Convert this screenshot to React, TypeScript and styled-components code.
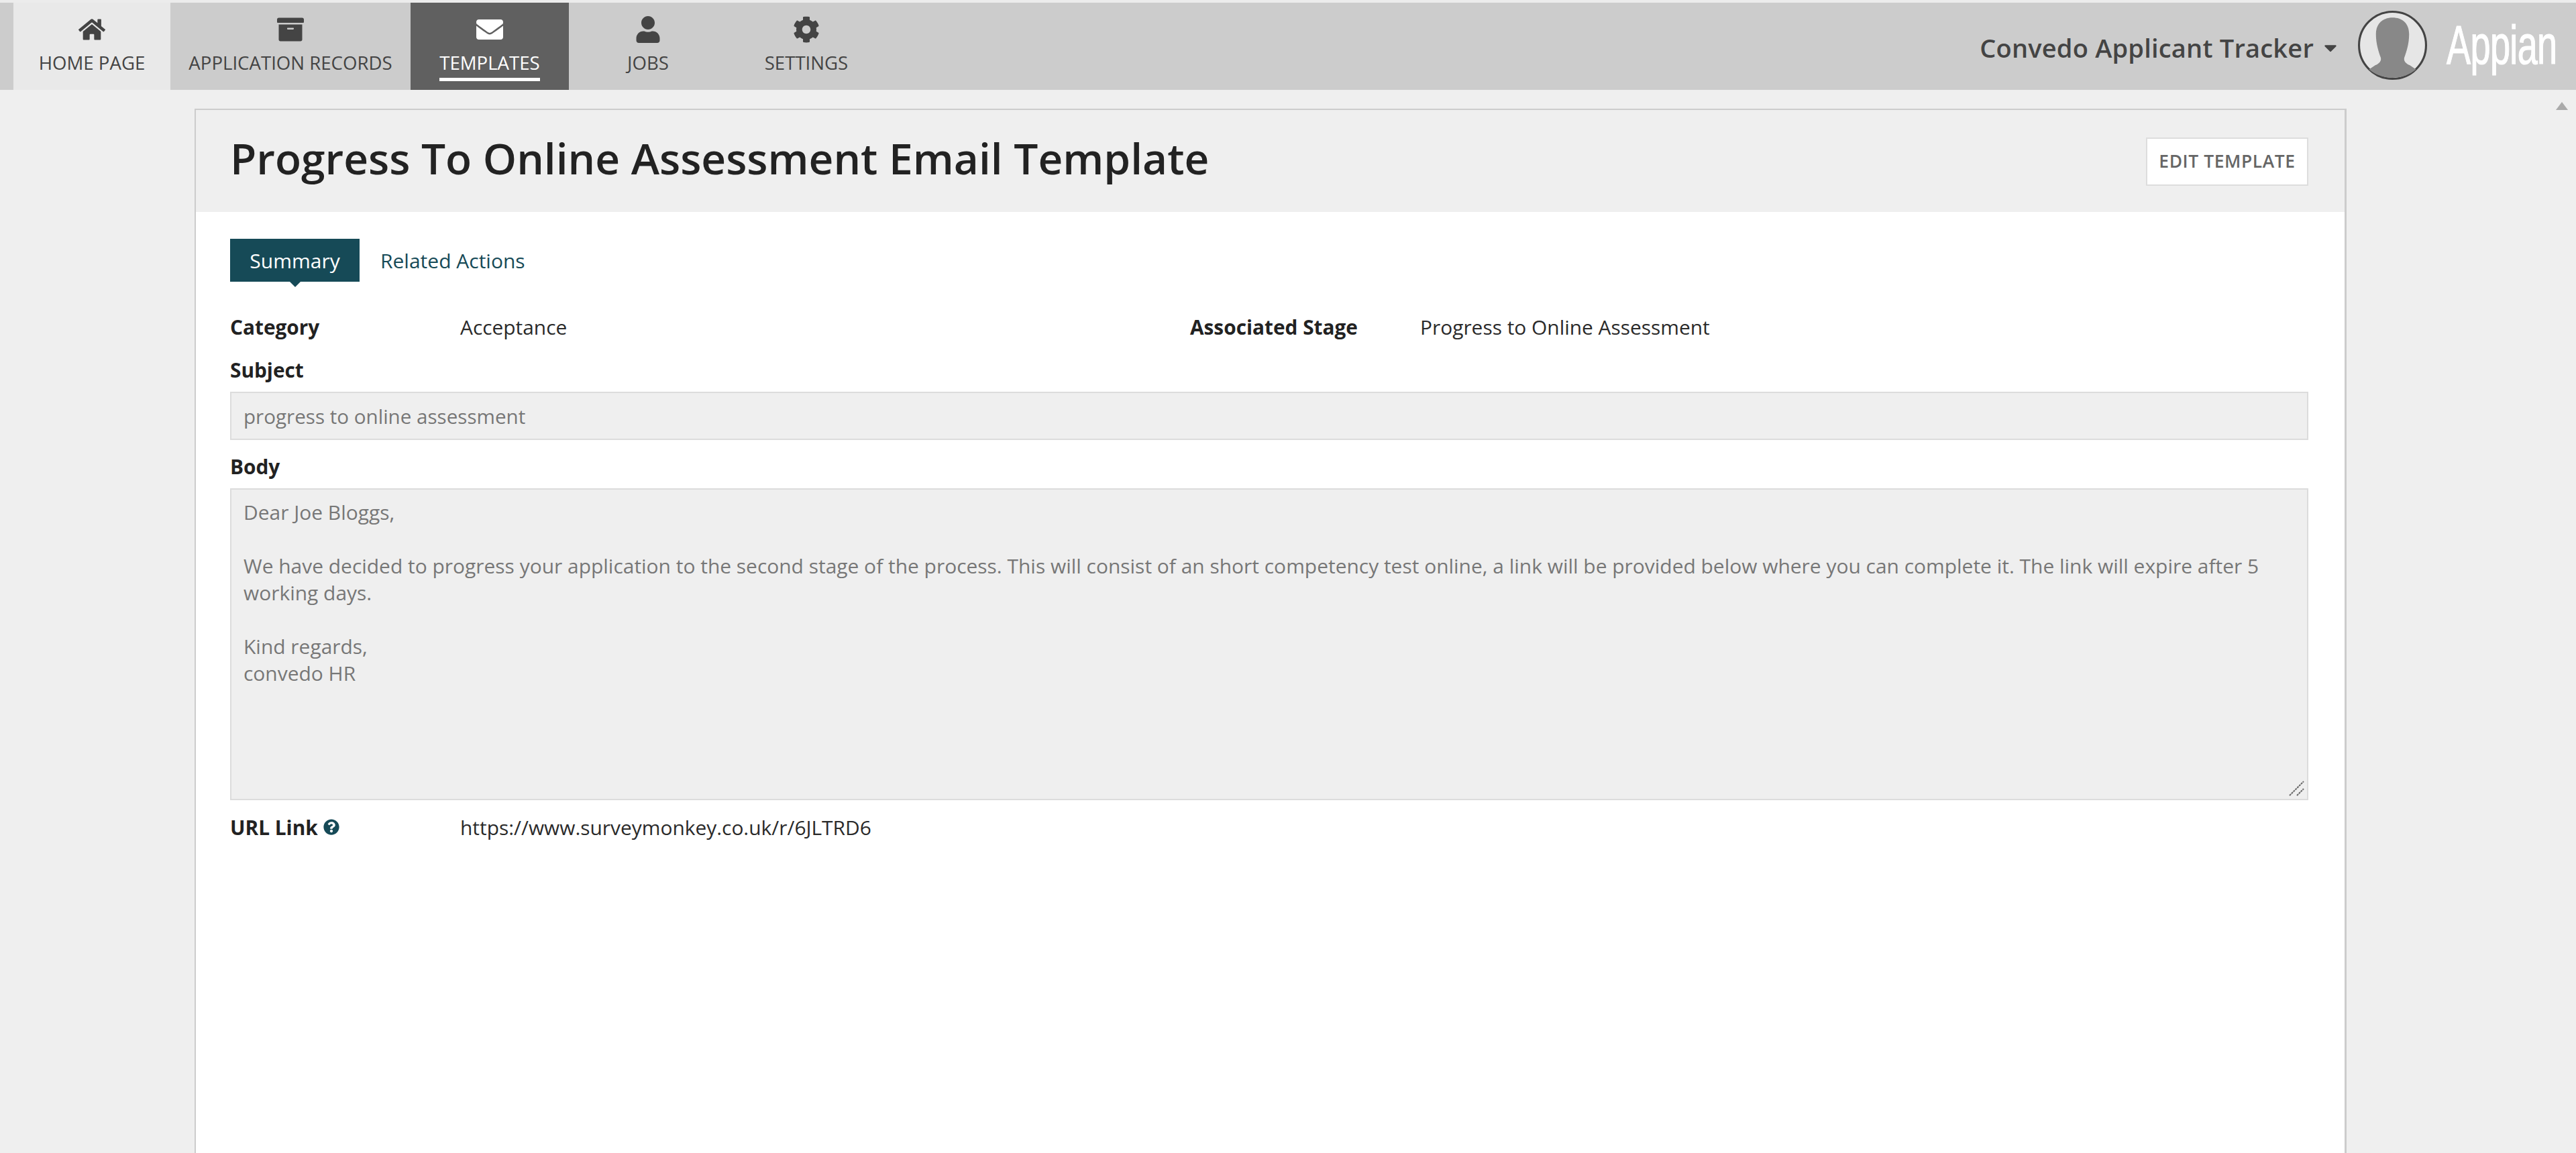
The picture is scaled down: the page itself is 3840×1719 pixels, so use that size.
import React from "react";
import styled, { createGlobalStyle } from "styled-components";
import { FaHome, FaArchive, FaEnvelope, FaUser, FaCog, FaQuestionCircle, FaCaretDown } from "react-icons/fa";

const Global = createGlobalStyle`
  html, body { margin: 0; padding: 0; height: 100%; overflow: hidden; background: #efefef; }
  #root { height: 100%; }
  * { box-sizing: border-box; }
`;
const Page = styled.div`
  height: 1719px; overflow: hidden; display: flex; flex-direction: column; position: relative;
  font-family: "Open Sans", "Liberation Sans", sans-serif; color: #222; background: #efefef;
`;
const TopStrip = styled.div`height: 4px; background: #ececec; flex: none;`;
const NavBar = styled.header`height: 130px; flex: none; display: flex; align-items: stretch; background: #cccccc; padding-left: 20px;`;
const Tab = styled.div<{ $w: number; $state?: "home" | "active" }>`
  width: ${p => p.$w}px; display: flex; flex-direction: column; align-items: center; padding-top: 21px;
  background: ${p => p.$state === "home" ? "#e9e9e9" : p.$state === "active" ? "#606060" : "transparent"};
  color: ${p => p.$state === "active" ? "#fff" : "#444"};
`;
const TabIcon = styled.div`height: 38px; display: flex; align-items: center; justify-content: center; font-size: 40px;`;
const TabLabel = styled.span<{ $active?: boolean }>`
  margin-top: 10px; font-size: 27.6px; line-height: 40px; height: 48px; white-space: nowrap;
  border-bottom: ${p => p.$active ? "5px solid #fff" : "none"};
`;
const RightNav = styled.div`margin-left: auto; display: flex; align-items: center; padding-right: 27px; padding-bottom: 4px;`;
const AppName = styled.span`font-size: 38px; font-weight: 600; color: #444; letter-spacing: 0.2px; white-space: nowrap; position: relative; top: 4px;`;
const Caret = styled.span`display: flex; font-size: 30px; color: #444; margin-left: 10px; margin-right: 26px; position: relative; top: 4px;`;
const Avatar = styled.svg`width: 103px; height: 103px; flex: none; display: block;`;
const LogoBox = styled.div`margin-left: 29px; width: 166px; height: 100px; flex: none; overflow: visible;`;
const Logo = styled.span`
  display: inline-block; font-family: "Liberation Sans", sans-serif; font-size: 82px; line-height: 100px; color: #fff;
  white-space: nowrap; transform: scaleX(0.66); transform-origin: left center; letter-spacing: -1px;
  -webkit-text-stroke: 1.2px #fff;
`;
const ScrollArrow = styled.div`
  position: absolute; top: 152px; left: 3810px; width: 0; height: 0;
  border-left: 9px solid transparent; border-right: 9px solid transparent; border-bottom: 12px solid #aaa;
`;
const Main = styled.main`flex: 1; padding: 28px 342px 0 290px;`;
const Card = styled.section`height: 100%; background: #fff; border: 2px solid #cccccc; border-bottom: none; border-right-width: 3px;`;
const CardHeader = styled.div`
  height: 152px; background: #efefef; display: flex; align-items: center; justify-content: space-between;
  padding: 0 54px 0 51px;
`;
const Title = styled.h1`margin: 0 0 8px; font-size: 64px; font-weight: 600; line-height: 88px; color: #222; white-space: nowrap;`;
const EditButton = styled.button`
  width: 242px; height: 72px; background: #fff; border: 2px solid #ddd; font-family: inherit;
  font-size: 26.4px; font-weight: 600; color: #666; letter-spacing: 0.6px; padding: 0 0 3px; margin-top: 2px;
`;
const CardBody = styled.div`padding: 40px 54px 0 51px;`;
const Tabs = styled.div`display: flex; align-items: center; gap: 31px;`;
const SummaryTab = styled.div`
  position: relative; width: 193px; height: 64px; background: #164a57; color: #fff;
  display: flex; align-items: center; justify-content: center; font-size: 30px;
  &::after {
    content: ""; position: absolute; top: 100%; left: 50%; margin-left: -8px;
    border-left: 8px solid transparent; border-right: 8px solid transparent; border-top: 8px solid #164a57;
  }
`;
const TabLink = styled.span`font-size: 30px; color: #164a57;`;
const Fields = styled.div`display: grid; grid-template-columns: 1431px 1fr; margin-top: 43px;`;
const Pair = styled.div`display: flex; align-items: center; height: 48px;`;
const Key = styled.span`width: 343px; flex: none; display: flex; align-items: center; gap: 8px; font-size: 29.8px; font-weight: 700; color: #222; white-space: nowrap;`;
const Val = styled.span`font-size: 29.9px; color: #2a2a2a; white-space: nowrap;`;
const Label = styled.div`font-size: 29.8px; font-weight: 700; line-height: 48px; color: #222;`;
const StackLabel = styled(Label)<{ $mt: number }>`margin-top: ${p => p.$mt}px;`;
const ReadonlyInput = styled.div`
  height: 72px; margin-top: 8px; background: #efefef; border: 2px solid #dcdcdc; padding: 0 18px;
  display: flex; align-items: center; font-size: 29.6px; color: #777;
`;
const ReadonlyArea = styled.div`
  position: relative; height: 465px; margin-top: 8px; background: #efefef; border: 2px solid #dcdcdc;
  padding: 14px 18px; font-size: 29.95px; line-height: 40px; color: #777; white-space: pre-line;
`;
const Grip = styled.svg`position: absolute; right: 3px; bottom: 3px; width: 26px; height: 26px;`;
const LinkRow = styled(Pair)`margin-top: 16px;`;
const HelpIcon = styled.span`display: flex; font-size: 24px; color: #164a57;`;

const navItems = [
  { label: "HOME PAGE", w: 234, icon: <FaHome />, state: "home" as const },
  { label: "APPLICATION RECORDS", w: 358, icon: <FaArchive /> },
  { label: "TEMPLATES", w: 236, icon: <FaEnvelope />, state: "active" as const },
  { label: "JOBS", w: 236, icon: <FaUser /> },
  { label: "SETTINGS", w: 236, icon: <FaCog /> },
];

const bodyText = `Dear Joe Bloggs,

We have decided to progress your application to the second stage of the process. This will consist of an short competency test online, a link will be provided below where you can complete it. The link will expire after 5
working days.

Kind regards,
convedo HR`;

export default function App() {
  return (
    <Page>
      <Global />
      <TopStrip />
      <NavBar>
        {navItems.map(n => (
          <Tab key={n.label} $w={n.w} $state={n.state}>
            <TabIcon>{n.icon}</TabIcon>
            <TabLabel $active={n.state === "active"}>{n.label}</TabLabel>
          </Tab>
        ))}
        <RightNav>
          <AppName>Convedo Applicant Tracker</AppName>
          <Caret><FaCaretDown /></Caret>
          <Avatar viewBox="0 0 100 100">
            <circle cx="50" cy="50" r="48.5" fill="#e6e6e6" stroke="#444" strokeWidth="3" />
            <path d="M50 10c-14 0-24 8-24 24 0 14 4 26 7 34 1 5-2 8-8 11l-9 6c8 7 20 12 34 12s26-5 34-12l-9-6c-6-3-9-6-8-11 3-8 7-20 7-34 0-16-10-24-24-24z" fill="#888" />
          </Avatar>
          <LogoBox><Logo>Appian</Logo></LogoBox>
        </RightNav>
      </NavBar>
      <ScrollArrow />
      <Main>
        <Card>
          <CardHeader>
            <Title>Progress To Online Assessment Email Template</Title>
            <EditButton>EDIT TEMPLATE</EditButton>
          </CardHeader>
          <CardBody>
            <Tabs>
              <SummaryTab>Summary</SummaryTab>
              <TabLink>Related Actions</TabLink>
            </Tabs>
            <Fields>
              <Pair><Key>Category</Key><Val>Acceptance</Val></Pair>
              <Pair><Key>Associated Stage</Key><Val>Progress to Online Assessment</Val></Pair>
            </Fields>
            <StackLabel $mt={17}>Subject</StackLabel>
            <ReadonlyInput>progress to online assessment</ReadonlyInput>
            <StackLabel $mt={16}>Body</StackLabel>
            <ReadonlyArea>
              {bodyText}
              <Grip viewBox="0 0 26 26">
                <path d="M3 24L24 3M14 24L24 14" stroke="#666" strokeWidth="2" strokeDasharray="3 1" fill="none" />
              </Grip>
            </ReadonlyArea>
            <LinkRow>
              <Key>URL Link<HelpIcon><FaQuestionCircle /></HelpIcon></Key>
              <Val>https://www.surveymonkey.co.uk/r/6JLTRD6</Val>
            </LinkRow>
          </CardBody>
        </Card>
      </Main>
    </Page>
  );
}
